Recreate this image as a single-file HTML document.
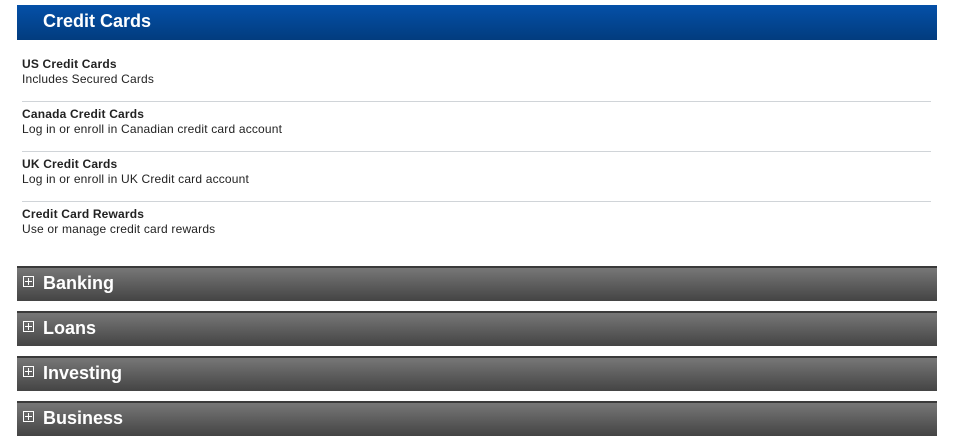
<!DOCTYPE html><html><head><style>
body{margin:0;background:#fff;font-family:"Liberation Sans",Arial,sans-serif;width:961px;height:442px;overflow:hidden;position:relative}
.hd{position:absolute;left:17px;top:5px;width:920px;height:35px;background:linear-gradient(#0450a8,#023c7e);color:#fff;font-weight:bold;font-size:18px;line-height:33px;box-sizing:border-box;padding-left:26px}
.it{position:absolute;left:22px;width:909px;font-size:12px;letter-spacing:.18px;color:#222;line-height:15px}
.it b{display:block;color:#222}
.sep{position:absolute;left:22px;width:909px;height:1px;background:#d0d4d8}
.bar{position:absolute;left:17px;width:920px;height:35px;background:linear-gradient(#777,#444);border-top:2px solid #3a3a3a;box-sizing:border-box;color:#fff;font-weight:bold;font-size:18px;line-height:31px;padding-left:26px}
.bar i{position:absolute;left:6px;top:8px;width:9px;height:9px;border:1px solid #fff}
.bar i:before{content:"";position:absolute;left:1px;top:4px;width:7px;height:1px;background:#fff}
.bar i:after{content:"";position:absolute;left:4px;top:1px;width:1px;height:7px;background:#fff}
</style></head><body>
<div class="hd">Credit Cards</div>
<div class="it" style="top:57px"><b>US Credit Cards</b>Includes Secured Cards</div>
<div class="sep" style="top:101px"></div>
<div class="it" style="top:107px"><b>Canada Credit Cards</b>Log in or enroll in Canadian credit card account</div>
<div class="sep" style="top:151px"></div>
<div class="it" style="top:157px"><b>UK Credit Cards</b>Log in or enroll in UK Credit card account</div>
<div class="sep" style="top:201px"></div>
<div class="it" style="top:207px"><b>Credit Card Rewards</b>Use or manage credit card rewards</div>
<div class="bar" style="top:266px"><i></i>Banking</div>
<div class="bar" style="top:311px"><i></i>Loans</div>
<div class="bar" style="top:356px"><i></i>Investing</div>
<div class="bar" style="top:401px"><i></i>Business</div>
</body></html>
